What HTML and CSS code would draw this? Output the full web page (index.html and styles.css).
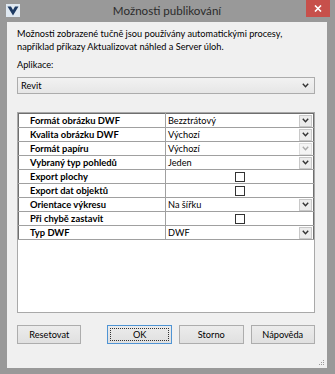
FILE: index.html
```html
<!DOCTYPE html>
<html lang="cs">
<head>
    <meta charset="UTF-8">
    <title>Možnosti publikování</title>
    <link rel="stylesheet" href="styles.css">
</head>
<body>
    <div class="window">
        <div class="titlebar">
            <svg class="app-icon" viewBox="0 0 14 13">
                <rect x="0" y="0" width="14" height="13" fill="#dfe8f1"/>
                <polygon points="1.5,2.5 5,2.5 7,6 9,2.5 12.5,2.5 7,11.5" fill="#1d3a63"/>
            </svg>
            <div class="title">Možnosti publikování</div>
            <div class="close-btn">
                <svg viewBox="0 0 8 7" width="8" height="7">
                    <path d="M1 0.5 L7 6.5 M7 0.5 L1 6.5" stroke="#fff" stroke-width="1.6"/>
                </svg>
            </div>
        </div>

        <div class="client">
            <p class="note">Možnosti zobrazené tučně jsou používány automatickými procesy,<br>například příkazy Aktualizovat náhled a Server úloh.</p>

            <div class="field-label">Aplikace:</div>
            <div class="combo">
                <span>Revit</span>
                <svg class="chev" viewBox="0 0 7 5" width="7" height="5"><polyline points="0.8,0.8 3.5,3.8 6.2,0.8" fill="none" stroke="#333" stroke-width="1.4"/></svg>
            </div>

            <div class="props">
                <table class="prop-table">
                    <tr>
                        <td class="name">Formát obrázku DWF</td>
                        <td class="value"><div class="drop"><span>Bezztrátový</span><span class="drop-btn"><svg viewBox="0 0 7 5" width="7" height="5"><polyline points="0.8,0.8 3.5,3.8 6.2,0.8" fill="none" stroke="#333" stroke-width="1.4"/></svg></span></div></td>
                    </tr>
                    <tr>
                        <td class="name">Kvalita obrázku DWF</td>
                        <td class="value"><div class="drop"><span>Výchozí</span><span class="drop-btn"><svg viewBox="0 0 7 5" width="7" height="5"><polyline points="0.8,0.8 3.5,3.8 6.2,0.8" fill="none" stroke="#333" stroke-width="1.4"/></svg></span></div></td>
                    </tr>
                    <tr>
                        <td class="name">Formát papíru</td>
                        <td class="value"><div class="drop"><span>Výchozí</span><span class="drop-btn disabled"><svg viewBox="0 0 7 5" width="7" height="5"><polyline points="0.8,0.8 3.5,3.8 6.2,0.8" fill="none" stroke="#aaa" stroke-width="1.4"/></svg></span></div></td>
                    </tr>
                    <tr>
                        <td class="name">Vybraný typ pohledů</td>
                        <td class="value"><div class="drop"><span>Jeden</span><span class="drop-btn"><svg viewBox="0 0 7 5" width="7" height="5"><polyline points="0.8,0.8 3.5,3.8 6.2,0.8" fill="none" stroke="#333" stroke-width="1.4"/></svg></span></div></td>
                    </tr>
                    <tr>
                        <td class="name">Export plochy</td>
                        <td class="value"><div class="check-cell"><span class="checkbox"></span></div></td>
                    </tr>
                    <tr>
                        <td class="name">Export dat objektů</td>
                        <td class="value"><div class="check-cell"><span class="checkbox"></span></div></td>
                    </tr>
                    <tr>
                        <td class="name">Orientace výkresu</td>
                        <td class="value"><div class="drop"><span>Na šířku</span><span class="drop-btn"><svg viewBox="0 0 7 5" width="7" height="5"><polyline points="0.8,0.8 3.5,3.8 6.2,0.8" fill="none" stroke="#333" stroke-width="1.4"/></svg></span></div></td>
                    </tr>
                    <tr>
                        <td class="name">Při chybě zastavit</td>
                        <td class="value"><div class="check-cell"><span class="checkbox"></span></div></td>
                    </tr>
                    <tr>
                        <td class="name">Typ DWF</td>
                        <td class="value"><div class="drop"><span>DWF</span><span class="drop-btn"><svg viewBox="0 0 7 5" width="7" height="5"><polyline points="0.8,0.8 3.5,3.8 6.2,0.8" fill="none" stroke="#333" stroke-width="1.4"/></svg></span></div></td>
                    </tr>
                </table>
            </div>

            <div class="buttons">
                <div class="btn reset">Resetovat</div>
                <div class="btn default"><span class="focus">OK</span></div>
                <div class="btn">Storno</div>
                <div class="btn">Nápověda</div>
            </div>

            <svg class="grip" viewBox="0 0 6 6" width="6" height="6">
                <rect x="4" y="0" width="1" height="1" fill="#999"/>
                <rect x="2" y="2" width="1" height="1" fill="#999"/>
                <rect x="4" y="2" width="1" height="1" fill="#999"/>
                <rect x="0" y="4" width="1" height="1" fill="#999"/>
                <rect x="2" y="4" width="1" height="1" fill="#999"/>
                <rect x="4" y="4" width="1" height="1" fill="#999"/>
            </svg>
        </div>
    </div>
</body>
</html>
```

FILE: styles.css
```css
* {
    box-sizing: border-box;
}
body {
    margin: 0;
    width: 335px;
    height: 374px;
    overflow: hidden;
    background: #999;
    font-family: Lato, 'Liberation Sans', sans-serif;
    font-size: 9.2px;
    color: #000;
}
.window {
    display: flex;
    flex-direction: column;
    height: 374px;
    padding: 0 8px 6px 7px;
}
.titlebar {
    height: 22px;
    display: grid;
    grid-template-columns: 24px 1fr 24px;
    align-items: center;
}
.app-icon {
    width: 14px;
    height: 13px;
    margin-left: -1px;
    margin-top: -1px;
}
.title {
    text-align: center;
    font-size: 11.6px;
    color: #2b2b2b;
    padding-bottom: 1px;
}
.close-btn {
    align-self: start;
    width: 24px;
    height: 17px;
    margin-left: 3px;
    background: #c7504b;
    display: flex;
    align-items: center;
    justify-content: center;
}
.client {
    flex: 1;
    position: relative;
    background: #f0f0f0;
    padding: 5px 12px 0 10px;
}
.note {
    margin: 0;
    line-height: 13px;
}
.field-label {
    margin-top: 5px;
    line-height: 13px;
}
.combo {
    margin-top: 6px;
    height: 17px;
    border: 1px solid #acacac;
    background: linear-gradient(#f2f2f2, #e6e6e6);
    display: flex;
    align-items: center;
    justify-content: space-between;
    padding: 0 5px 0 3px;
}
.props {
    margin-top: 18px;
    height: 201px;
    background: #fff;
    border: 1px solid #a9a9a9;
}
.prop-table {
    width: 100%;
    border-collapse: collapse;
    border: 1px solid #6e6e6e;
}
.prop-table td {
    height: 14px;
    padding: 0;
    border-bottom: 1px solid #a0a0a0;
    line-height: 13px;
}
.prop-table .name {
    width: 147px;
    padding-left: 11px;
    font-weight: bold;
    font-size: 9.4px;
    border-right: 1px solid #a0a0a0;
}
.prop-table .value {
    padding-left: 2px;
}
.drop {
    display: flex;
    align-items: center;
    justify-content: space-between;
    height: 13px;
}
.drop-btn {
    width: 13px;
    height: 12px;
    margin-right: 1px;
    border: 1px solid #c8c8c8;
    background: #ececec;
    display: flex;
    align-items: center;
    justify-content: center;
}
.drop-btn.disabled {
    background: #f4f4f4;
    border-color: #ddd;
}
.check-cell {
    display: flex;
    justify-content: center;
    align-items: center;
    height: 13px;
    padding-right: 2px;
}
.checkbox {
    width: 10px;
    height: 10px;
    border: 1px solid #333;
    background: #fff;
}
.buttons {
    margin-top: 12px;
    display: flex;
    gap: 7px;
}
.btn {
    width: 65px;
    height: 19px;
    border: 1px solid #adadad;
    background: linear-gradient(#ececec, #e0e0e0);
    display: flex;
    align-items: center;
    justify-content: center;
}
.btn.reset {
    margin-right: 19px;
}
.btn.default {
    border-color: #4f94d4;
    padding: 2px;
}
.focus {
    width: 100%;
    height: 100%;
    border: 1px dotted #333;
    display: flex;
    align-items: center;
    justify-content: center;
}
.grip {
    position: absolute;
    right: 2px;
    bottom: 2px;
}
```
